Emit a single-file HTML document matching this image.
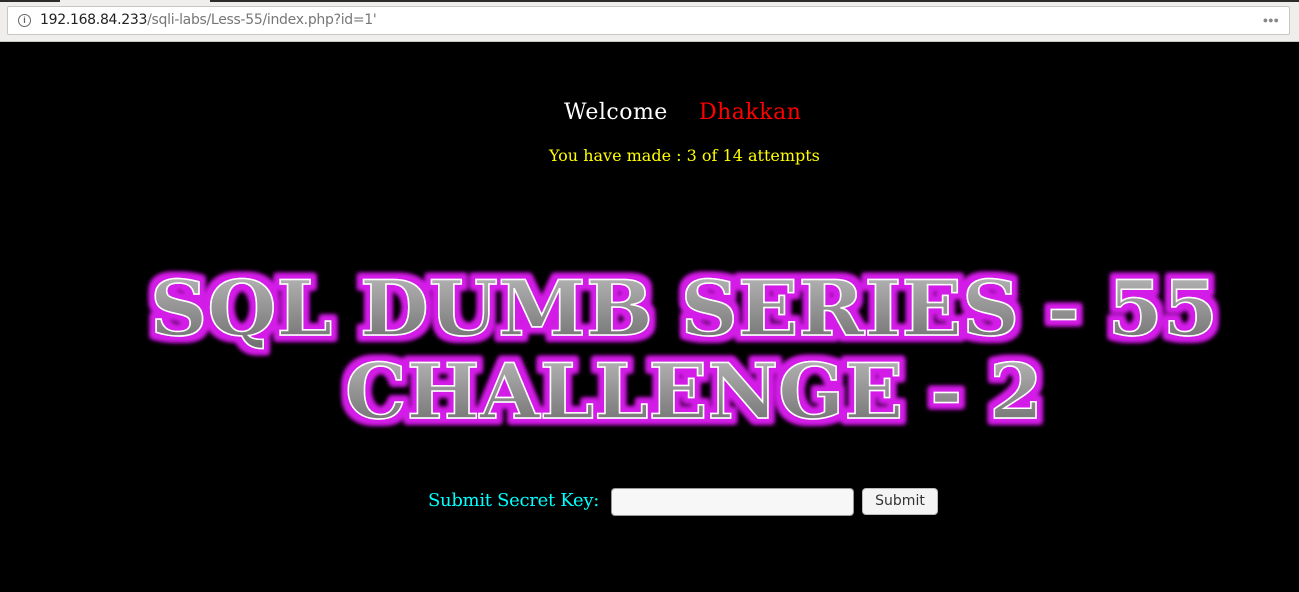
<!DOCTYPE html>
<html><head><meta charset="utf-8"><style>
body{margin:0;width:1299px;height:592px;overflow:hidden;background:#000;font-family:"DejaVu Serif","Liberation Serif",serif;position:relative}
.chrome{position:absolute;left:0;top:0;width:1299px;height:41px;background:#efeeec;border-bottom:1px solid #c9c7c3}
.strip{position:absolute;left:0;top:0;width:1299px;height:2px;background:#2d2c2a}
.tab{position:absolute;left:60px;top:0;width:150px;height:2px;background:#efeeec}
.url{position:absolute;left:7px;top:6px;width:1283px;height:29px;background:#fff;border:1px solid #c8c6c2;border-radius:2px;box-sizing:border-box}
.url .t{position:absolute;left:32px;top:5px;font:14px "DejaVu Sans",sans-serif;color:#222;letter-spacing:-0.3px}
.url .t span{color:#777}
.info{position:absolute;left:10px;top:7px;width:11px;height:11px;border:1px solid #666;border-radius:50%;font:bold 9px "Liberation Sans",sans-serif;color:#666;text-align:center;line-height:11px}
.dots{position:absolute;right:10px;top:8px;font:bold 9px sans-serif;color:#888}
.abs{position:absolute;white-space:nowrap}
</style></head><body>
<div class="chrome"><div class="strip"></div><div class="tab"></div>
<div class="url"><div class="info">i</div><div class="t">192.168.84.233<span>/sqli-labs/Less-55/index.php?id=1'</span></div><div class="dots">●●●</div></div></div>
<div class="abs" style="left:564px;top:100px;font-size:22px;color:#fff;letter-spacing:0.5px">Welcome</div>
<div class="abs" style="left:699px;top:100px;font-size:22px;color:#f00;letter-spacing:0.5px">Dhakkan</div>
<div class="abs" style="left:549px;top:146px;font-size:16px;color:#ff0">You have made : 3 of 14 attempts</div>
<svg class="abs" style="left:0;top:0" width="1299" height="592">
<defs>
<filter id="g" x="-5%" y="-30%" width="110%" height="160%"><feMorphology in="SourceAlpha" operator="dilate" radius="5" result="d"/><feGaussianBlur in="d" stdDeviation="2.5" result="b"/><feFlood flood-color="#d41ee8"/><feComposite in2="b" operator="in" result="c"/><feMerge><feMergeNode in="c"/><feMergeNode in="c"/><feMergeNode in="SourceGraphic"/></feMerge></filter>
<linearGradient id="m" x1="0" y1="0" x2="0" y2="1"><stop offset="0" stop-color="#bdbdbd"/><stop offset="1" stop-color="#6a6a6a"/></linearGradient>
</defs>
<g filter="url(#g)" fill="url(#m)" stroke="#fff" stroke-width="1.5" font-family="DejaVu Serif" font-weight="bold" font-size="76">
<text x="150" y="335" textLength="1068" lengthAdjust="spacingAndGlyphs">SQL DUMB SERIES - 55</text>
<text x="345" y="418" textLength="698" lengthAdjust="spacingAndGlyphs">CHALLENGE - 2</text>
</g></svg>
<div class="abs" style="left:428px;top:490px;font-size:18px;color:#0ff;letter-spacing:-0.3px">Submit Secret Key:</div>
<div class="abs" style="left:611px;top:488px;width:243px;height:28px;background:#f7f7f7;border:1px solid #999;border-radius:4px;box-sizing:border-box"></div>
<div class="abs" style="left:862px;top:488px;width:76px;height:27px;background:#f4f4f4;border:1px solid #bbb;border-radius:4px;box-sizing:border-box;font:14px 'DejaVu Sans',sans-serif;color:#333;text-align:center;line-height:25px">Submit</div>
</body></html>
